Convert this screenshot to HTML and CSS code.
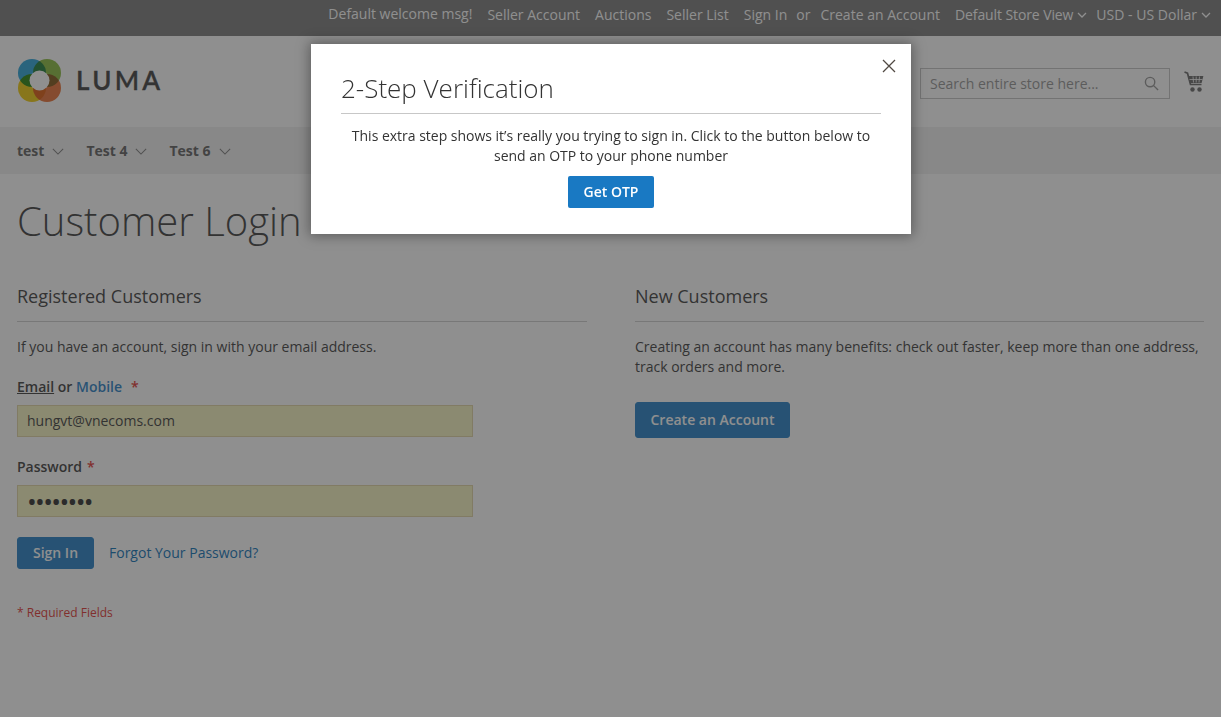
FILE: index.html
```html
<!DOCTYPE html>
<html lang="en">
<head>
<meta charset="utf-8">
<title>Customer Login</title>
<link rel="stylesheet" href="styles.css">
</head>
<body>
<div class="topbar">
  <span class="welcome">Default welcome msg!</span>
  <a>Seller Account</a>
  <a>Auctions</a>
  <a>Seller List</a>
  <span class="signin"><a>Sign In</a><span class="or">or</span></span>
  <a>Create an Account</a>
  <span class="switch">Default Store View<svg class="chev-s" viewBox="0 0 10 6"><path d="M1 1l4 4 4-4"/></svg></span>
  <span class="switch cur">USD - US Dollar<svg class="chev-s" viewBox="0 0 10 6"><path d="M1 1l4 4 4-4"/></svg></span>
</div>
<header class="header">
  <div class="logo">
    <svg class="logo-mark" viewBox="0 0 43 43">
      <circle class="petal" cx="14" cy="14" r="14" fill="#1f9fd8"/>
      <circle class="petal" cx="29" cy="14" r="14" fill="#84b833"/>
      <circle class="petal" cx="14" cy="29" r="14" fill="#f0c800"/>
      <circle class="petal" cx="29" cy="29" r="14" fill="#e9692a"/>
      <circle cx="21.500" cy="21.500" r="10" fill="#fff"/>
    </svg>
    <span class="logo-text">LUMA</span>
  </div>
  <div class="tools">
    <div class="search">
      <span>Search entire store here...</span>
      <svg class="search-ico" viewBox="0 0 16 16"><circle cx="6.500" cy="6.500" r="5"/><path d="M10 10l5 5"/></svg>
    </div>
    <svg class="cart" viewBox="0 0 20 22">
      <path class="cart-line" d="M.5 1l3 1.200 3 11.300h11"/>
      <path class="cart-body" d="M4.400 5h15l-1.800 7H6.200z"/>
      <path class="cart-grid" d="M9 5.500l.5 6M12.200 5.500v6M15.500 5.500l-.5 6M5.500 8.500h13"/>
      <circle cx="8.500" cy="18.500" r="2.200"/><circle cx="15.500" cy="18.500" r="2.200"/>
    </svg>
  </div>
</header>
<nav class="nav">
  <a>test<svg class="chev" viewBox="0 0 14 8"><path d="M1 1l6 6 6-6"/></svg></a>
  <a>Test 4<svg class="chev" viewBox="0 0 14 8"><path d="M1 1l6 6 6-6"/></svg></a>
  <a>Test 6<svg class="chev" viewBox="0 0 14 8"><path d="M1 1l6 6 6-6"/></svg></a>
</nav>
<main class="main">
  <h1 class="page-title">Customer Login</h1>
  <div class="columns">
    <section class="col">
      <h2 class="block-title">Registered Customers</h2>
      <p class="note">If you have an account, sign in with your email address.</p>
      <div class="field">
        <label class="label"><u>Email</u> or <span class="blue">Mobile</span><span class="req req-far">*</span></label>
        <div class="input">hungvt@vnecoms.com</div>
      </div>
      <div class="field">
        <label class="label">Password<span class="req">*</span></label>
        <div class="input dots">••••••••</div>
      </div>
      <div class="actions">
        <button class="btn signin-btn">Sign In</button>
        <a class="forgot">Forgot Your Password?</a>
      </div>
      <p class="required">* Required Fields</p>
    </section>
    <section class="col">
      <h2 class="block-title">New Customers</h2>
      <p class="note note-wide">Creating an account has many benefits: check out faster, keep more than one address, track orders and more.</p>
      <button class="btn create-btn">Create an Account</button>
    </section>
  </div>
</main>
<div class="overlay"></div>
<div class="modal">
  <svg class="close" viewBox="0 0 14 14"><path d="M1 1l12 12M13 1L1 13"/></svg>
  <h2 class="modal-title">2-Step Verification</h2>
  <p class="modal-text">This extra step shows it’s really you trying to sign in. Click to the button below to send an OTP to your phone number</p>
  <button class="otp">Get OTP</button>
</div>
</body>
</html>
```
FILE: styles.css
```css
* { box-sizing: border-box; }
html, body { height: 100%; }
body {
  margin: 0;
  font-family: "Open Sans", sans-serif;
  font-size: 14px;
  line-height: 20px;
  color: #333;
  background: #fff;
  overflow: hidden;
}
a { color: inherit; text-decoration: none; }

.topbar {
  height: 36px;
  background: #737373;
  color: #fff;
  display: flex;
  justify-content: flex-end;
  align-items: center;
  gap: 15px;
  padding: 0 10px 6px 0;
  white-space: nowrap;
}
.welcome { margin-top: -2px; }
.signin { display: inline-flex; gap: 9px; margin-right: -5px; }
.switch { display: inline-flex; align-items: center; gap: 4px; letter-spacing: -.1px; }
.switch.cur { margin-left: -6px; letter-spacing: .01px; }
.chev-s { width: 10px; height: 6px; fill: none; stroke: #fff; stroke-width: 1.300; }

.header {
  height: 91px;
  padding: 0 17px;
  display: flex;
  justify-content: space-between;
}
.logo { display: flex; align-items: center; gap: 15px; height: 89px; padding-left: 1px; }
.logo-mark { width: 43px; height: 43px; isolation: isolate; }
.petal { mix-blend-mode: multiply; }
.logo-text {
  font-family: Lato, sans-serif;
  font-size: 26px;
  font-weight: 600;
  letter-spacing: 3.300px;
  color: #333;
  line-height: 1;
  margin-top: -2px;
  -webkit-text-stroke: .3px #333;
}
.tools { display: flex; align-items: flex-start; gap: 14px; padding-top: 32px; }
.search {
  width: 250px;
  height: 31px;
  border: 1px solid #c2c2c2;
  display: flex;
  align-items: center;
  justify-content: space-between;
  padding: 0 10px 0 9px;
  color: #8f8f8f;
  background: #fff;
}
.search-ico { width: 15px; height: 15px; fill: none; stroke: #8f8f8f; stroke-width: 1.500; }
.cart { width: 20px; height: 22px; margin-top: 3px; fill: #606060; }
.cart-line { fill: none; stroke: #606060; stroke-width: 1.700; }
.cart-body { fill: #606060; }
.cart-grid { fill: none; stroke: #fff; stroke-width: .8; }

.nav {
  height: 47px;
  background: #f0f0f0;
  display: flex;
  align-items: center;
  gap: 22px;
  padding: 0 17px;
  font-weight: 700;
  color: #575757;
}
.nav a { display: inline-flex; align-items: center; gap: 8px; }
.chev { width: 12px; height: 7px; fill: none; stroke: #757575; stroke-width: 1.200; margin-top: 2px; }

.main { padding: 0 17px; }
.page-title {
  margin: 20px 0 0;
  font-size: 40px;
  line-height: 54px;
  font-weight: 300;
  color: #333;
}
.columns { display: grid; grid-template-columns: 570px 569px; column-gap: 48px; margin-top: 36px; }
.block-title {
  margin: 0 0 15px;
  padding-bottom: 13px;
  border-bottom: 1px solid #ccc;
  font-size: 18px;
  line-height: 24px;
  font-weight: 400;
  color: #333;
}
.note { margin: 0 0 20px; }
.note-wide { margin-bottom: 25px; }
.field { margin-bottom: 20px; }
.label { display: block; font-weight: 600; margin-bottom: 8px; }
.blue { color: #1979c3; }
.req { color: #e02b27; margin-left: 5px; font-weight: 600; }
.req-far { margin-left: 9px; }
.input {
  width: 456px;
  height: 32px;
  border: 1px solid #e0d2a0;
  background: #f7f3bd;
  padding: 0 9px;
  line-height: 30px;
  color: #333;
}
.dots { font-size: 26px; letter-spacing: -1.670px; color: #222; }
.actions { display: flex; align-items: center; gap: 15px; }
.btn {
  font: 600 14px/20px "Open Sans", sans-serif;
  color: #fff;
  background: #1979c3;
  border: 1px solid #1979c3;
  border-radius: 3px;
  padding: 0;
  height: 32px;
}
.signin-btn { width: 77px; }
.create-btn { width: 155px; height: 36px; }
.forgot { color: #006bb4; }
.required { margin: 34px 0 0; font-size: 12px; color: #e02b27; }

.overlay {
  position: fixed;
  inset: 0;
  background: rgba(51, 51, 51, .55);
}
.modal {
  position: fixed;
  left: 311px;
  top: 44px;
  width: 600px;
  height: 190px;
  background: #fff;
  box-shadow: 0 0 12px 2px rgba(0, 0, 0, .35);
  padding: 0 30px;
  text-align: center;
}
.close {
  position: absolute;
  top: 15px;
  right: 15px;
  width: 14px;
  height: 14px;
  fill: none;
  stroke: #514943;
  stroke-width: 1.300;
}
.modal-title {
  margin: 26px 0 12px;
  padding-bottom: 6px;
  border-bottom: 1px solid #c7c7c7;
  font-size: 26px;
  line-height: 37px;
  font-weight: 300;
  text-align: left;
  color: #333;
}
.modal-text { margin: 0 0 10px; letter-spacing: -.012px; }
.otp {
  width: 86px;
  height: 32px;
  font: 600 14px/20px "Open Sans", sans-serif;
  color: #fff;
  background: #1979c3;
  border: 0;
  border-radius: 2px;
  padding: 0;
}
```
